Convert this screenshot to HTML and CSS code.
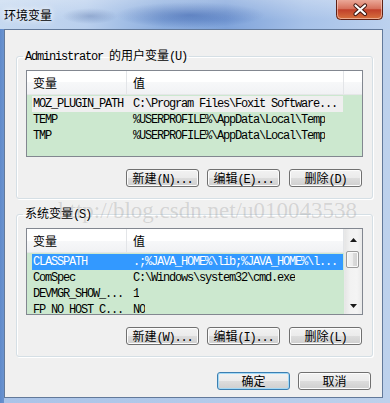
FILE: index.html
```html
<!DOCTYPE html>
<html lang="zh-CN">
<head>
<meta charset="utf-8">
<title>环境变量</title>
<link rel="stylesheet" href="styles.css">
</head>
<body>
<div class="window">
  <div class="titlebar">
    <span class="title cj">环境变量</span>
    <button class="close" aria-label="关闭">
      <svg width="47" height="20" viewBox="0 0 47 20">
        <defs>
          <linearGradient id="cg" x1="0" y1="0" x2="0" y2="1">
            <stop offset="0" stop-color="#eba898"/>
            <stop offset="0.45" stop-color="#d6705b"/>
            <stop offset="0.5" stop-color="#c1402a"/>
            <stop offset="1" stop-color="#d8743f"/>
          </linearGradient>
        </defs>
        <path d="M0.5 0 V15.5 A4 4 0 0 0 4.5 19.5 H42.5 A4 4 0 0 0 46.5 15.5 V0" fill="url(#cg)" stroke="#5e2014"/>
        <path d="M1.5 0 V15 A3.5 3.5 0 0 0 5 18.5 H42 A3.5 3.5 0 0 0 45.5 15 V0" fill="none" stroke="rgba(255,220,210,0.55)"/>
        <path d="M19.5 5.5 L29 14 M29 5.5 L19.5 14" stroke="#3f1610" stroke-width="4.2" stroke-linecap="round"/>
        <path d="M19.5 5.5 L29 14 M29 5.5 L19.5 14" stroke="#ffffff" stroke-width="2.2" stroke-linecap="round"/>
      </svg>
    </button>
  </div>
  <div class="client">
    <fieldset class="group g1">
      <legend>Administrator <span class="cj">的用户变量</span>(U)</legend>
      <div class="list">
        <div class="main">
          <div class="head">
            <div class="hc c1 cj">变量</div>
            <div class="hc c2 cj">值</div>
            <div class="hc c3"></div>
          </div>
          <div class="rows">
            <div class="row hl"><span class="c1">MOZ_PLUGIN_PATH</span><span class="c2">C:\Program Files\Foxit Software...</span></div>
            <div class="row"><span class="c1">TEMP</span><span class="c2">%USERPROFILE%\AppData\Local\Temp</span></div>
            <div class="row"><span class="c1">TMP</span><span class="c2">%USERPROFILE%\AppData\Local\Temp</span></div>
          </div>
        </div>
      </div>
      <div class="btns">
        <button class="btn"><span class="cj">新建</span>(N)...</button>
        <button class="btn"><span class="cj">编辑</span>(E)...</button>
        <button class="btn"><span class="cj">删除</span>(D)</button>
      </div>
    </fieldset>

    <fieldset class="group g2">
      <legend><span class="cj">系统变量</span>(S)</legend>
      <div class="list">
        <div class="main">
          <div class="head">
            <div class="hc c1 cj">变量</div>
            <div class="hc c2 cj">值</div>
          </div>
          <div class="rows">
            <div class="row sel"><span class="c1">CLASSPATH</span><span class="c2">.;%JAVA_HOME%\lib;%JAVA_HOME%\l...</span></div>
            <div class="row"><span class="c1">ComSpec</span><span class="c2">C:\Windows\system32\cmd.exe</span></div>
            <div class="row"><span class="c1">DEVMGR_SHOW_...</span><span class="c2">1</span></div>
            <div class="row"><span class="c1">FP_NO_HOST_C...</span><span class="c2">NO</span></div>
          </div>
        </div>
        <div class="vscroll">
          <div class="sb-btn up"><svg width="7" height="4" viewBox="0 0 7 4"><path d="M0 4 L3.5 0 L7 4 Z"/></svg></div>
          <div class="thumb"></div>
          <div class="sb-space"></div>
          <div class="sb-btn down"><svg width="7" height="4" viewBox="0 0 7 4"><path d="M0 0 L3.5 4 L7 0 Z"/></svg></div>
        </div>
      </div>
      <div class="btns">
        <button class="btn"><span class="cj">新建</span>(W)...</button>
        <button class="btn"><span class="cj">编辑</span>(I)...</button>
        <button class="btn"><span class="cj">删除</span>(L)</button>
      </div>
    </fieldset>

    <div class="footer">
      <button class="btn default cj">确定</button>
      <button class="btn cj">取消</button>
    </div>
  </div>
  <div class="watermark">http://blog.csdn.net/u010043538</div>
</div>
</body>
</html>
```
FILE: styles.css
```css
* { box-sizing: border-box; }

html, body {
  margin: 0;
  padding: 0;
  background: #ffffff;
}

body {
  font-family: "Liberation Mono", "Noto Sans CJK SC", monospace;
  font-size: 12px;
  letter-spacing: -1.2px;
  color: #000;
}

.cj {
  font-family: "Noto Sans CJK SC", "Liberation Sans", sans-serif;
  letter-spacing: 0;
}

.window {
  width: 390px;
  height: 403px;
  position: relative;
  overflow: hidden;
  display: flex;
  flex-direction: column;
  background:
    linear-gradient(90deg, #5f8acb 0, #6a93cf 4px, #a9c3e8 4px, #bdd1ec 100%);
}

.titlebar {
  height: 29px;
  flex: none;
  display: flex;
  justify-content: space-between;
  align-items: flex-start;
  padding: 0 7px 0 4px;
  background:
    linear-gradient(180deg, rgba(255,255,255,0.28), rgba(255,255,255,0) 70%),
    radial-gradient(ellipse 75px 13px at 190px 15px, rgba(45,85,165,0.55), rgba(45,85,165,0)),
    radial-gradient(ellipse 28px 8px at 90px 16px, rgba(60,90,150,0.35), rgba(60,90,150,0)),
    linear-gradient(90deg, #c6d9f0 0%, #b9cfed 22%, #8badde 42%, #7fa3da 58%, #a6c1e8 78%, #bcd1ee 100%);
}

.title {
  line-height: 14px;
  margin-top: 8px;
  text-shadow: 0 0 5px #ffffff, 0 0 9px rgba(255,255,255,0.8);
}

.close {
  width: 47px;
  height: 20px;
  padding: 0;
  border: 0;
  background: none;
  display: block;
}
.close svg { display: block; }

.client {
  margin: 0 7px 0 4px;
  height: 369px;
  flex: none;
  background: #f0f0f0;
  border: 1px solid #62799a;
  display: flex;
  flex-direction: column;
}

.group {
  width: 357px;
  margin: 0 0 0 11px;
  padding: 6px 9px 11px;
  border: 1px solid #d5dfe5;
  border-radius: 3px;
  box-shadow: inset 1px 1px 0 #ffffff, 1px 1px 0 #ffffff;
  min-inline-size: 0;
}
.g1 { margin-top: 18px; }
.g2 { margin-top: 7px; }

.group legend {
  padding: 0 2px;
  margin-left: -3px;
  line-height: 14px;
}

.list {
  height: 87px;
  border: 1px solid #828790;
  background: #cce8cf;
  display: flex;
  overflow: hidden;
}

.main {
  flex: 1;
  min-width: 0;
}

.head {
  display: flex;
  height: 24px;
  line-height: 23px;
  background: linear-gradient(180deg, #ffffff 0%, #ffffff 50%, #f7f8f9 50%, #f1f2f4 100%);
  border-bottom: 1px solid #e5e6e8;
}

.hc {
  border-right: 1px solid #e3e5e8;
  padding-left: 6px;
}
.hc.c1 { width: 100px; }
.hc.c2 { width: 217px; }
.hc.c3 { flex: 1; border-right: 0; }

.rows { padding-top: 1px; }

.row {
  display: flex;
  margin-left: 5px;
  width: 311px;
  height: 16px;
  line-height: 16px;
  white-space: nowrap;
}
.row .c1 {
  width: 95px;
  padding-left: 1px;
  overflow: hidden;
}
.row .c2 {
  padding-left: 6px;
  overflow: hidden;
}
.row.hl { background: #efefef; }
.row.sel { background: #3399ff; color: #ffffff; }

.vscroll {
  width: 18px;
  flex: none;
  display: flex;
  flex-direction: column;
  background: linear-gradient(90deg, #e6e6e6 0%, #f2f2f2 30%, #f4f4f4 70%, #eaeaea 100%);
  border-left: 1px solid #e8e8e8;
}

.sb-btn {
  display: flex;
  align-items: center;
  justify-content: center;
}
.sb-btn.up { height: 21px; }
.sb-btn.down { height: 17px; }
.sb-btn svg { display: block; }
.sb-btn path { fill: #1a1a1a; }

.thumb {
  height: 17px;
  margin: 1px 3px 0 1px;
  border: 1px solid #9b9b9b;
  border-radius: 2px;
  background: linear-gradient(90deg, #f6f6f6 0%, #ececec 50%, #dcdcdc 51%, #d2d2d2 100%);
  box-shadow: inset 0 0 0 1px #fafafa;
}

.sb-space { flex: 1; }

.btns {
  display: flex;
  justify-content: flex-end;
  gap: 8px;
  margin-top: 12px;
  padding-right: 1px;
}

.btn {
  width: 73px;
  height: 18px;
  padding: 0;
  font: inherit;
  letter-spacing: inherit;
  line-height: 16px;
  color: #000;
  border: 1px solid #707070;
  border-radius: 3px;
  background: linear-gradient(180deg, #f2f2f2 0%, #ebebeb 50%, #dddddd 50%, #cfcfcf 100%);
  box-shadow: inset 0 0 0 1px #fcfcfc;
  white-space: nowrap;
}
.btns .btn:last-child { margin-left: 1px; }

.btn.cj {
  font-family: "Noto Sans CJK SC", "Liberation Sans", sans-serif;
  letter-spacing: 0;
}

.btn.default {
  border-color: #3c7fb1;
  box-shadow: inset 0 0 0 1px #a3d9f6;
}

.footer {
  display: flex;
  justify-content: flex-end;
  gap: 8px;
  margin-top: 15px;
  padding-right: 11px;
}

.watermark {
  position: absolute;
  left: 58px;
  top: 199px;
  font-family: "Liberation Serif", serif;
  font-size: 23px;
  line-height: 23px;
  letter-spacing: 0;
  color: rgba(120,120,120,0.24);
  white-space: nowrap;
  pointer-events: none;
}
```
